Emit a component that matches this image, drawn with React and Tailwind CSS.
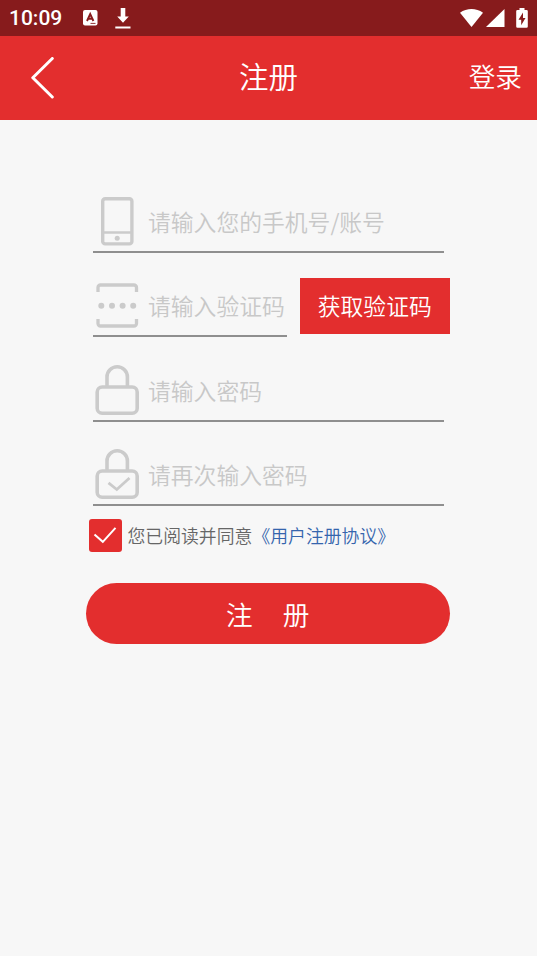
import React from "react";

const PhoneIcon = () => (
  <svg width="44" height="50" viewBox="0 0 44 50" fill="none" stroke="#cbcbcb" strokeWidth="3.4">
    <rect x="7.7" y="2.7" width="29.2" height="45.2" rx="2.5" />
    <path d="M7.5 36.5h29.5" strokeWidth="2.5" />
    <circle cx="22.2" cy="42.2" r="2.5" fill="#cbcbcb" stroke="none" />
  </svg>
);

const CodeIcon = () => (
  <svg width="44" height="50" viewBox="0 0 44 50" fill="none" stroke="#cbcbcb" strokeWidth="3.3">
    <path
      d="M3 12V7.500a2.500 2.500 0 0 1 2.500-2.500h33.500a2.500 2.500 0 0 1 2.500 2.500v4.500M3 39v4.500a2.500 2.500 0 0 0 2.500 2.500h33.500a2.500 2.500 0 0 0 2.500-2.500v-4.500"
    />
    <g fill="#cbcbcb" stroke="none">
      <circle cx="6.3" cy="25.8" r="3" />
      <circle cx="17" cy="25.8" r="3" />
      <circle cx="27.6" cy="25.8" r="3" />
      <circle cx="38.2" cy="25.8" r="3" />
    </g>
  </svg>
);

const LockIcon = ({ checked }) => (
  <svg width="44" height="50" viewBox="0 0 44 50" fill="none" stroke="#cbcbcb" strokeWidth="3.6">
    <path d="M12 21.300V12a10.200 10.200 0 0 1 20.400 0V21.300" />
    <rect x="2.2" y="22" width="40" height="26.2" rx="5" />
    {checked && <path d="M13.500 33.800l8.300 6.700L34.500 29" strokeWidth="2.8" />}
  </svg>
);

const Field = ({ icon, placeholder, width }) => (
  <div
    className={`flex h-[62px] items-center gap-[9px] border-b-2 border-[#8f8f8f] pl-0.5 ${width}`}
  >
    <span className="shrink-0">{icon}</span>
    <span className="pt-0.5 whitespace-nowrap text-[22.8px] leading-8 font-[350] text-[#c8c8c8]">
      {placeholder}
    </span>
  </div>
);

const StatusBar = () => (
  <div className="flex h-9 items-center bg-[#871b1c] pl-[9px] pr-[9px] text-white">
    <span className="w-[74px] font-[Roboto] text-[21px] leading-6 font-medium">10:09</span>
    <svg width="15" height="16" viewBox="0 0 15 16">
      <rect width="14.5" height="15.5" rx="2" fill="#fff" />
      <path d="M4 11L7.200 4l3.200 7M5.200 8.800h4" fill="none" stroke="#871b1c" strokeWidth="1.9" />
      <path d="M7.500 13.400h5" stroke="#871b1c" strokeWidth="0.9" />
    </svg>
    <svg className="ml-[17px]" width="16" height="21" viewBox="0 0 16 21" fill="#fff">
      <path d="M5.700 0h4.600v8.600h3.500L8 14.800 2.200 8.600h3.500zM.3 18.500h15.200v2H.3z" />
    </svg>
    <div className="ml-auto flex items-center">
      <svg width="23" height="18" viewBox="0 0 23 18" fill="#fff">
        <path d="M11.500 18L0 3.700C6.800-1.200 16.200-1.200 23 3.700z" />
      </svg>
      <svg className="ml-[3px]" width="19" height="18" viewBox="0 0 19 18" fill="#fff">
        <path d="M18.500 0v18H0z" />
      </svg>
      <svg className="ml-[11px]" width="12" height="20" viewBox="0 0 12 20">
        <path
          d="M3.500 0h5v2h2a1.300 1.300 0 0 1 1.300 1.300v15.200a1.300 1.300 0 0 1-1.300 1.300h-9A1.300 1.300 0 0 1 .2 18.500V3.300A1.300 1.300 0 0 1 1.500 2h2z"
          fill="#fff"
        />
        <path d="M7 4.500L2.500 11.800h2.700v5.400l4.300-7.300H7z" fill="#871b1c" />
      </svg>
    </div>
  </div>
);

const Header = () => (
  <header className="grid h-[83.5px] grid-cols-3 items-center bg-[#e32e2e] pl-[30px] pr-[15px] text-white">
    <svg width="25" height="42" viewBox="0 0 25 42" fill="none" stroke="#fff" strokeWidth="3">
      <path d="M22.300 1.500L2.800 20.800l19.500 19.200" strokeLinecap="round" strokeLinejoin="round" />
    </svg>
    <h1 className="-ml-[15px] pb-1.5 text-center text-[29.5px] leading-10 font-[350]">注册</h1>
    <span className="pb-1 text-right text-[26.7px] leading-10 font-[350]">登录</span>
  </header>
);

const App = () => {
  return (
    <div className="min-h-screen bg-[#f7f7f7] font-['Noto_Sans_CJK_SC',sans-serif]">
      <StatusBar />
      <Header />
      <main className="flex flex-col pt-[71px] pl-[86px]">
        <div className="flex flex-col gap-[22.6px] pl-[7px]">
          <Field icon={<PhoneIcon />} placeholder="请输入您的手机号/账号" width="w-[350.5px]" />
          <div className="flex">
            <Field icon={<CodeIcon />} placeholder="请输入验证码" width="w-[193.5px]" />
            <button className="mt-[3px] ml-[13.5px] h-[55.5px] w-[149.5px] bg-[#e32e2e] pt-px text-[22.8px] font-[350] text-white">
              获取验证码
            </button>
          </div>
          <Field icon={<LockIcon />} placeholder="请输入密码" width="w-[350.5px]" />
          <Field icon={<LockIcon checked />} placeholder="请再次输入密码" width="w-[350.5px]" />
        </div>

        <div className="mt-[12.5px] ml-[2.5px] flex items-center">
          <span className="flex size-[33px] items-center justify-center rounded-[3px] bg-[#e32e2e]">
            <svg width="24" height="18" viewBox="0 0 24 18" fill="none" stroke="#fff" strokeWidth="2">
              <path d="M1.500 8.500l8.300 7.300L22.500 1.800" />
            </svg>
          </span>
          <span className="ml-[6px] text-[17.85px] leading-7 font-[350] text-[#666]">
            您已阅读并同意<span className="text-[#3565ad]">《用户注册协议》</span>
          </span>
        </div>

        <button className="mt-[31px] flex h-[61px] w-[363.5px] items-center justify-center gap-[30px] rounded-full bg-[#e32e2e] pt-0.5 text-[26.7px] font-[350] text-white">
          <span>注</span>
          <span>册</span>
        </button>
      </main>
    </div>
  );
};

export default App;
